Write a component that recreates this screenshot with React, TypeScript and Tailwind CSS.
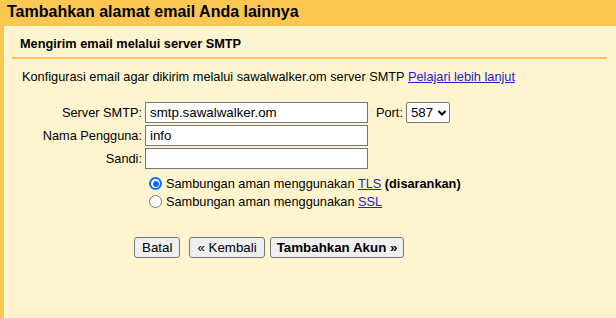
import React from "react";

export default function App() {
  const btn =
    "h-[21px] px-[6px] border border-[#767676] rounded-[3px] bg-[#efefef] text-[13.33px] leading-[15px]";
  return (
    <div className="w-[616px] h-[318px] overflow-hidden bg-[#fef4cf] text-black text-[12.75px] font-['Liberation_Sans',Arial,sans-serif] flex flex-col">
      <div className="h-[26px] bg-[#f9c752] shrink-0 pl-[7px] pt-[2px] text-[16px] font-bold leading-[20px]">
        Tambahkan alamat email Anda lainnya
      </div>
      <div className="flex-1 flex">
        <div className="w-[4px] bg-[#f9c752]" />
        <div className="flex-1 flex flex-col pl-[8px] pr-[9px]">
          <div className="pl-[8px] pt-[10px] h-[31px] font-bold leading-[15px]">
            Mengirim email melalui server SMTP
          </div>
          <div className="h-[2px] bg-[#f9c64f]" />
          <div className="pl-[10px] pt-[10px] leading-[15px]">
            Konfigurasi email agar dikirim melalui sawalwalker.om server SMTP{" "}
            <a href="#" className="text-[#2222cc] underline">
              Pelajari lebih lanjut
            </a>
          </div>
          <div className="mt-[18px] ml-[-12px] grid grid-cols-[143px_auto] gap-y-[2px] items-center">
            <div className="text-right pr-[1px] leading-[15px]">Server SMTP:</div>
            <div className="flex items-center ml-[2px]">
              <div className="w-[223px] h-[21px] border border-[#767676] bg-white px-[4px] flex items-center text-[13.33px] leading-[15px]">
                smtp.sawalwalker.om
              </div>
              <span className="ml-[8px] mr-[3px]">Port:</span>
              <div className="w-[44px] h-[21px] border border-[#767676] rounded-[2px] bg-white pl-[4px] flex items-center text-[13.33px] gap-[4px]">
                <span>587</span>
                <svg width="10" height="8" viewBox="0 0 10 8">
                  <path d="M1.5 2 L5 5.5 L8.5 2" stroke="black" strokeWidth="2" fill="none" />
                </svg>
              </div>
            </div>
            <div className="text-right pr-[1px] leading-[15px]">Nama Pengguna:</div>
            <div className="ml-[2px] w-[223px] h-[21px] border border-[#767676] bg-white px-[4px] flex items-center text-[13.33px] leading-[15px]">
              info
            </div>
            <div className="text-right pr-[1px] leading-[15px]">Sandi:</div>
            <div className="ml-[2px] w-[223px] h-[21px] border border-[#767676] bg-white" />
          </div>
          <div className="ml-[137px] mt-[7px] flex flex-col gap-[3px]">
            <div className="flex items-center gap-[4px] leading-[15px]">
              <span className="w-[13px] h-[13px] rounded-full border-2 border-[#0f6ef0] bg-white flex items-center justify-center">
                <span className="w-[6px] h-[6px] rounded-full bg-[#0f6ef0]" />
              </span>
              <span>
                Sambungan aman menggunakan{" "}
                <a href="#" className="text-[#2222cc] underline">TLS</a>{" "}
                <b>(disarankan)</b>
              </span>
            </div>
            <div className="flex items-center gap-[4px] leading-[15px]">
              <span className="w-[13px] h-[13px] rounded-full border border-[#767676] bg-white" />
              <span>
                Sambungan aman menggunakan{" "}
                <a href="#" className="text-[#2222cc] underline">SSL</a>
              </span>
            </div>
          </div>
          <div className="ml-[122px] mt-[28px] flex gap-[9px]">
            <button className={`${btn} px-[7px]`}>Batal</button>
            <div className="flex gap-[5px]">
              <button className={`${btn} px-[7px]`}>« Kembali</button>
              <button className={`${btn} font-bold`}>Tambahkan Akun »</button>
            </div>
          </div>
        </div>
      </div>
    </div>
  );
}
